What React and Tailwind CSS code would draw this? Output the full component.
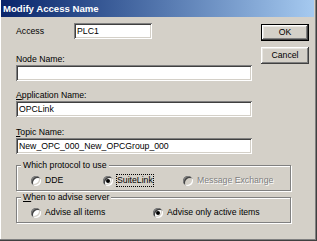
import React from 'react'

const bevelOut = 'shadow-[inset_-1px_-1px_#404040,inset_1px_1px_#ffffff,inset_-2px_-2px_#808080,inset_2px_2px_#e8e6e1]'
const sunken = 'shadow-[inset_1px_1px_#808080,inset_-1px_-1px_#ffffff,inset_2px_2px_#404040,inset_-2px_-2px_#d4d0c8]'

const Field = ({ value, className = '' }) => (
  <div className={`h-[16px] bg-white ${sunken} flex items-center px-[3px] text-[8.7px] leading-[11px] text-black whitespace-nowrap overflow-hidden ${className}`}>
    {value}
  </div>
)

const Radio = ({ checked, disabled }) => (
  <span
    className={`w-[10px] h-[10px] rounded-full flex items-center justify-center shrink-0 ${disabled ? 'bg-[#d4d0c8]' : 'bg-white'} shadow-[inset_1px_1px_#808080,inset_-1px_-1px_#ffffff,inset_2px_2px_#404040,inset_-2px_-2px_#d4d0c8]`}
  >
    {checked && <span className="w-[4px] h-[4px] rounded-full bg-black" />}
  </span>
)

const Option = ({ label, checked, disabled, focus, className = '' }) => (
  <div className={`flex items-center ${className}`}>
    <Radio checked={checked} disabled={disabled} />
    <span
      className={`ml-[3px] leading-[11px] border border-dotted ${focus ? 'border-black' : 'border-transparent'} ${disabled ? 'text-[#808080] [text-shadow:1px_1px_#ffffff]' : 'text-black'}`}
    >
      {label}
    </span>
  </div>
)

const Group = ({ legend, children, className = '' }) => (
  <fieldset className={`w-[275px] border border-[#808080] shadow-[inset_1px_1px_#ffffff,1px_1px_#ffffff] ${className}`}>
    <legend className="ml-[4px] px-[2px] bg-[#d4d0c8] leading-[11px] text-black">{legend}</legend>
    <div className="h-[19px] flex items-center pl-[14px]">{children}</div>
  </fieldset>
)

export default function App() {
  return (
    <div
      className="w-[317px] h-[241px] bg-[#d4d0c8] pl-[1px] pr-[3px] pb-[3px] flex flex-col shadow-[inset_-1px_-1px_#404040,inset_-2px_-2px_#808080,inset_1px_0_#ffffff] text-[8.7px] text-black"
      style={{ fontFamily: '"Liberation Sans", Arial, sans-serif' }}
    >
      {/* Title bar */}
      <div className="h-[17px] shrink-0 bg-gradient-to-r from-[#0a246a] to-[#a6caf0] flex items-center pl-[2px]">
        <span className="text-white font-bold text-[9.6px] leading-[12px]">Modify Access Name</span>
      </div>

      <div className="flex flex-col pt-[6px] pl-[15px]">
        {/* Fields and buttons */}
        <div className="flex">
          <div className="w-[236px] flex flex-col">
            <div className="flex items-center h-[16px]">
              <span className="w-[58px] leading-[11px]">Access</span>
              <Field value="PLC1" className="w-[78px]" />
            </div>

            <div className="mt-[14px]">
              <div className="h-[12px] leading-[12px]">Node Name:</div>
              <Field value="" />
            </div>

            <div className="mt-[8px]">
              <div className="h-[12px] leading-[12px]"><span className="underline">A</span>pplication Name:</div>
              <Field value="OPCLink" />
            </div>

            <div className="mt-[9px]">
              <div className="h-[12px] leading-[12px]"><span className="underline">T</span>opic Name:</div>
              <Field value="New_OPC_000_New_OPCGroup_000" />
            </div>
          </div>

          <div className="ml-[9px] mt-[1px] w-[48px] flex flex-col">
            <div className="h-[17px] border border-black">
              <div className={`h-full bg-[#d4d0c8] ${bevelOut} flex items-center justify-center leading-[11px]`}>OK</div>
            </div>
            <div className={`mt-[6px] h-[17px] bg-[#d4d0c8] ${bevelOut} flex items-center justify-center leading-[11px]`}>Cancel</div>
          </div>
        </div>

        {/* Protocol */}
        <Group legend="Which protocol to use" className="mt-[6px]">
          <Option label="DDE" className="w-[72px]" />
          <Option label="SuiteLink" checked focus className="w-[80px]" />
          <Option label="Message Exchange" disabled />
        </Group>

        {/* Advise */}
        <Group legend={<><span className="underline">W</span>hen to advise server</>} className="mt-[1px]">
          <Option label="Advise all items" className="w-[122px]" />
          <Option label="Advise only active items" checked />
        </Group>
      </div>
    </div>
  )
}
